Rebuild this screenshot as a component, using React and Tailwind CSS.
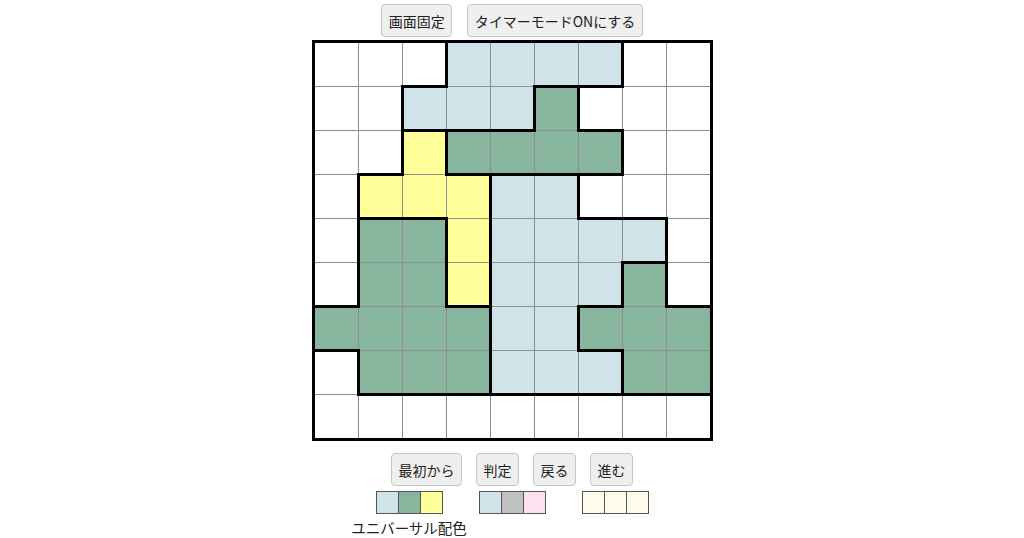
import React from "react";

// W = white, L = light blue, G = green, Y = yellow
const board = [
  "WWWLLLLWW",
  "WWLLLGWWW",
  "WWYGGGGWW",
  "WYYYLLWWW",
  "WGGYLLLLW",
  "WGGYLLLGW",
  "GGGGLLGGG",
  "WGGGLLLGG",
  "WWWWWWWWW",
];

const cellBg = {
  W: "bg-white",
  L: "bg-[#cfe4e8]",
  G: "bg-[#88b59d]",
  Y: "bg-[#ffff99]",
};

function Btn({ children }) {
  return (
    <button className="h-[33px] px-[6.5px] bg-[#efefef] border border-[#c6c6c6] rounded-[4px] text-[14px] leading-none text-[#222]">
      {children}
    </button>
  );
}

function Swatches({ colors }) {
  return (
    <div className="flex">
      {colors.map((c, i) => (
        <div
          key={i}
          className={
            i === 0
              ? `w-[23px] h-[23px] border border-[#555] ${c}`
              : `w-[22px] h-[23px] border border-l-0 border-[#555] ${c}`
          }
        />
      ))}
    </div>
  );
}

export default function App() {
  return (
    <div className="w-[1024px] h-[538px] bg-white overflow-hidden flex flex-col items-center pt-[4px] font-['Noto_Sans_CJK_JP','Noto_Sans',sans-serif]">
      <div className="flex gap-[15px]">
        <Btn>画面固定</Btn>
        <Btn>タイマーモードONにする</Btn>
      </div>

      <div className="mt-[3px] border-[3px] border-black">
        <div className="grid grid-cols-[repeat(9,43px)] auto-rows-[43px] gap-px bg-[#8e8e8e]">
          {board.map((row, r) =>
            row.split("").map((c, col) => {
              const right = col < 8 && row[col + 1] !== c;
              const bottom = r < 8 && board[r + 1][col] !== c;
              return (
                <div key={`${r}-${col}`} className={`relative ${cellBg[c]}`}>
                  {right && (
                    <div className="absolute top-[-2px] bottom-[-2px] right-[-2px] w-[3px] bg-black z-10" />
                  )}
                  {bottom && (
                    <div className="absolute left-[-2px] right-[-2px] bottom-[-2px] h-[3px] bg-black z-10" />
                  )}
                </div>
              );
            })
          )}
        </div>
      </div>

      <div className="mt-[12px] flex gap-[14px]">
        <Btn>最初から</Btn>
        <Btn>判定</Btn>
        <Btn>戻る</Btn>
        <Btn>進む</Btn>
      </div>

      <div className="mt-[5px] flex gap-[36px]">
        <div className="flex flex-col items-center">
          <Swatches colors={["bg-[#cfe4e8]", "bg-[#88b59d]", "bg-[#ffff99]"]} />
          <div className="w-[67px] flex justify-center mt-[5px]">
            <span className="whitespace-nowrap text-[14.5px] leading-[18px] text-[#222]">ユニバーサル配色</span>
          </div>
        </div>
        <Swatches colors={["bg-[#cfe4e8]", "bg-[#c0c0c0]", "bg-[#ffe0f0]"]} />
        <Swatches colors={["bg-[#fffbea]", "bg-[#fffbea]", "bg-[#fffbea]"]} />
      </div>
    </div>
  );
}
